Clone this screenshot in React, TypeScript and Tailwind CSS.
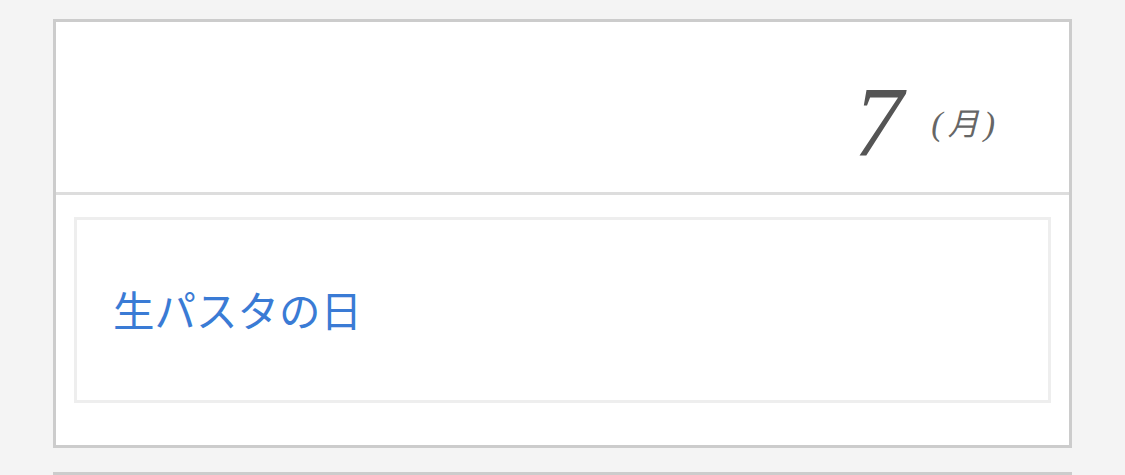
import React from "react";

export default function App() {
  return (
    <div className="w-[1125px] h-[475px] bg-[#f4f4f4] overflow-hidden pt-[19px] px-[53px]" style={{ fontFamily: '"Noto Sans CJK JP", "Noto Sans", sans-serif' }}>
      <div className="border-[3px] border-[#cccccc] bg-white">
        <div className="h-[173px] flex items-start justify-end pr-[74px] pt-[50px] border-b-[3px] border-[#dddddd]">
          <span className="text-[#555555] italic leading-none text-[99px]" style={{ fontFamily: '"Liberation Serif", serif' }}>7</span>
          <span className="text-[#666666] italic leading-none text-[34px] ml-[28px] mt-[35px]" style={{ fontFamily: '"Liberation Serif", "Noto Sans CJK JP", serif' }}>
            (<span className="mx-[5px] text-[31px]">月</span>)
          </span>
        </div>
        <div className="px-[18px] pt-[22px] pb-[42px]">
          <div className="border-[3px] border-[#eeeeee] h-[186px] flex items-center pl-[36px]">
            <span className="text-[#3a7bd5] text-[41.5px] leading-none">生パスタの日</span>
          </div>
        </div>
      </div>
      <div className="mt-[24px] border-t-[3px] border-[#cccccc] h-[20px]" />
    </div>
  );
}
